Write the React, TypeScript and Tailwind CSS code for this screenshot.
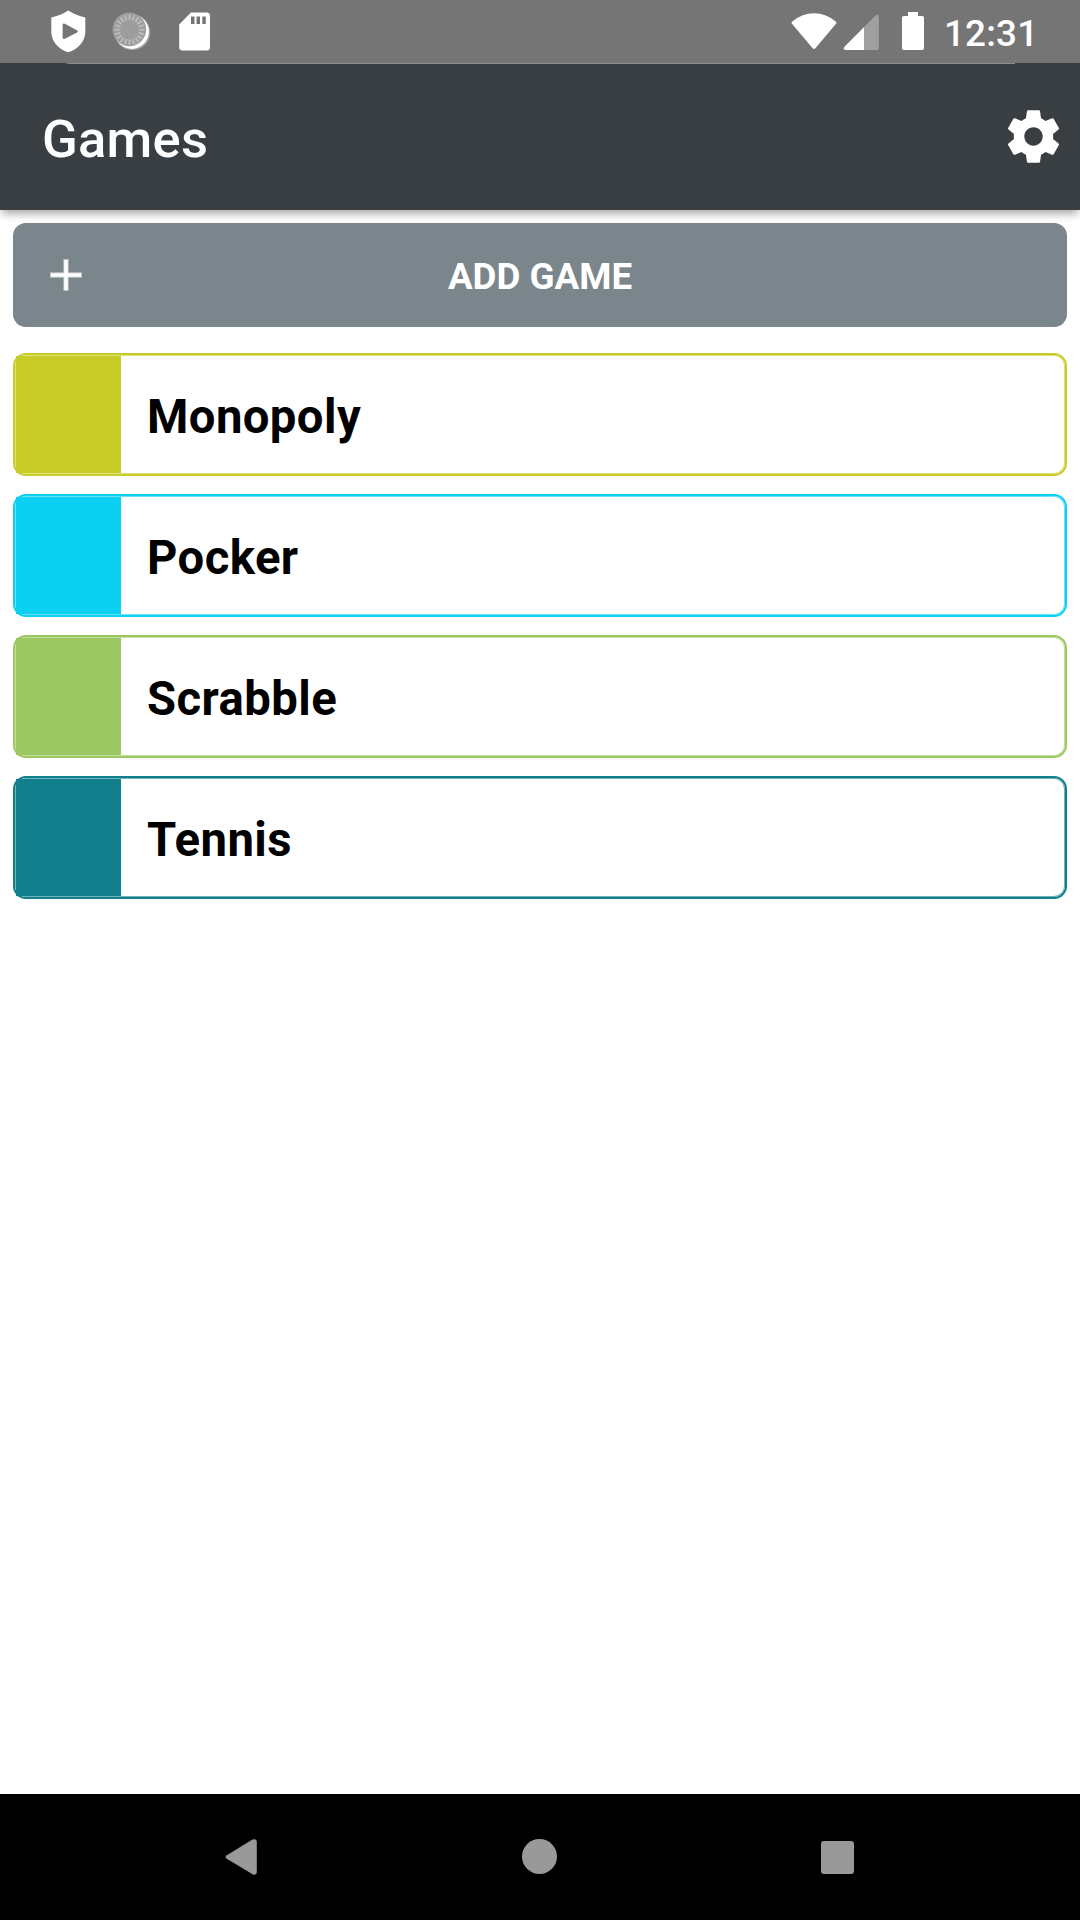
import React from "react";

type Game = { name: string; card: string; block: string };

const games: Game[] = [
  { name: "Monopoly", card: "border-[#c8cc26] inset-shadow-[0_0_0_1px_#dee07d]", block: "bg-[#c8cc26]" },
  { name: "Pocker", card: "border-[#0bd0f2] inset-shadow-[0_0_0_1px_#6de3f7]", block: "bg-[#0bd0f2]" },
  { name: "Scrabble", card: "border-[#9cc861] inset-shadow-[0_0_0_1px_#c4dea0]", block: "bg-[#9cc861]" },
  { name: "Tennis", card: "border-[#127f8d] inset-shadow-[0_0_0_1px_#71b2bb]", block: "bg-[#127f8d]" },
];

const ticks = Array.from({ length: 20 }, (_, i) => i * 18);

function StatusBar() {
  return (
    <div className="flex h-16 flex-col bg-[#757575]">
      <div className="flex h-[63px] items-start pr-[47px] pl-[50px] text-white">
        <svg width="37" height="63" viewBox="50 0 37 63" fill="currentColor">
          <path
            fillRule="evenodd"
            d="M68.3 10.5Q76 15.5 85.3 17.5V32C85.3 41 78 49.5 68.3 52.3C58.6 49.5 51.3 41 51.3 32V17.5Q60.6 15.5 68.3 10.5ZM64.8 23.8Q62.6 23 62.6 25V37.5Q62.6 39.5 64.8 38.8L77 32.4Q78.8 31.3 77 30.2Z"
          />
        </svg>
        <svg className="ml-6" width="40" height="63" viewBox="111 0 40 63">
          <circle cx="132.3" cy="32.3" r="17.9" fill="#a3a3a3" />
          <circle cx="131.7" cy="31.7" r="17.2" fill="#fff" />
          <circle cx="129.4" cy="29.4" r="16.8" fill="#9d9d9d" />
          {ticks.map((a) => (
            <path key={a} d="M129.5 14.5v5.5" stroke="#bdbdbd" strokeWidth="1.8" transform={`rotate(${a} 129.5 29.7)`} />
          ))}
        </svg>
        <svg className="ml-7" width="32" height="63" viewBox="179 0 32 63" fill="currentColor">
          <path
            fillRule="evenodd"
            d="M191 12.5H206.5Q210 12.5 210 16V47Q210 50.5 206.5 50.5H182.7Q179.2 50.5 179.2 47V24.5ZM191 16.5V24H194.5V16.5ZM196.5 16.5V24H200V16.5ZM202.3 16.5V24H205.8V16.5Z"
          />
        </svg>
        <svg className="ml-auto" width="46" height="63" viewBox="791 0 46 63" fill="currentColor">
          <path d="M792 21.8Q801.5 13.2 814 13.2T836 21.8Q837 22.6 836.2 23.6L815.4 48.3Q814 49.8 812.6 48.3L791.8 23.6Q791 22.6 792 21.8Z" />
        </svg>
        <svg className="ml-1.5" width="37" height="63" viewBox="843 0 37 63">
          <path d="M875.5 15.4Q878.9 13.2 878.9 17V48Q878.9 50 876.9 50H845.5Q842.5 49.5 844.5 46.8Z" fill="#9f9f9f" />
          <path d="M864 27.2V50H845.5Q842.5 49.5 844.5 46.8Z" fill="#fff" />
        </svg>
        <svg className="ml-[22px]" width="22" height="63" viewBox="902 0 22 63" fill="currentColor">
          <path d="M908 12H918V16H922.3Q924 16 924 17.7V48.3Q924 50 922.3 50H903.7Q902 50 902 48.3V17.7Q902 16 903.7 16H908Z" />
        </svg>
        <span className="ml-5 w-[89px] pt-2 text-[36.75px] leading-[52px] font-medium tracking-[0.2px] whitespace-nowrap">12:31</span>
      </div>
      <div className="flex h-px bg-[#393e42] pr-[65px] pl-[66px]">
        <div className="h-px w-[3px] bg-[#4f8260]" />
        <div className="h-px flex-1 bg-[#8f8f8f]" />
      </div>
    </div>
  );
}

export default function App() {
  return (
    <div className="flex h-[1920px] w-[1080px] flex-col overflow-hidden bg-white font-[Roboto,sans-serif]">
      <StatusBar />
      <header className="flex h-[146px] items-center justify-between bg-[#393e42] pr-[15px] pl-[42px] text-white shadow-[0_6px_8px_-2px_rgba(0,0,0,0.33)]">
        <h1 className="pt-[3px] text-[52.5px] leading-[62px] font-medium tracking-[0.25px]">Games</h1>
        <svg className="mb-0.5" width="63" height="63" viewBox="0 0 24 24" fill="currentColor">
          <path d="M19.43 12.98c.04-.32.07-.64.07-.98s-.03-.66-.07-.98l2.11-1.65c.19-.15.24-.42.12-.64l-2-3.46c-.12-.22-.39-.3-.61-.22l-2.49 1c-.52-.4-1.08-.73-1.69-.98l-.38-2.65C14.46 2.18 14.25 2 14 2h-4c-.25 0-.46.18-.49.42l-.38 2.65c-.61.25-1.17.59-1.69.98l-2.49-1c-.23-.09-.49 0-.61.22l-2 3.46c-.13.22-.07.49.12.64l2.11 1.65c-.04.32-.07.65-.07.98s.03.66.07.98l-2.11 1.65c-.19.15-.24.42-.12.64l2 3.46c.12.22.39.3.61.22l2.49-1c.52.4 1.08.73 1.69.98l.38 2.65c.03.24.24.42.49.42h4c.25 0 .46-.18.49-.42l.38-2.65c.61-.25 1.17-.59 1.69-.98l2.49 1c.23.09.49 0 .61-.22l2-3.46c.12-.22.07-.49-.12-.64l-2.11-1.65zM12 15.5c-1.93 0-3.5-1.57-3.5-3.5s1.57-3.5 3.5-3.5 3.5 1.57 3.5 3.5-1.57 3.5-3.5 3.5z" />
        </svg>
      </header>
      <main className="flex flex-1 flex-col px-[13px] pt-[13px]">
        <button className="grid h-[104px] grid-cols-[106px_1fr_106px] items-center rounded-[13px] bg-[#7a868b] text-white">
          <svg className="justify-self-center" width="34" height="34" viewBox="0 0 34 34" fill="none" stroke="currentColor">
            <path d="M17 1v32M1 17h32" strokeWidth="5.4" opacity="0.5" />
            <path d="M17 2v30M2 17h30" strokeWidth="3.6" />
          </svg>
          <span className="pt-1 text-[36.75px] leading-[44px] font-bold">ADD GAME</span>
        </button>
        <ul className="mt-[26px] flex flex-col gap-[18px]">
          {games.map((g) => (
            <li key={g.name} className={`flex h-[123px] rounded-[13px] border-2 p-px ${g.card}`}>
              <div className={`w-[105px] ${g.block}`} />
              <span className="pt-[33px] pl-[26px] text-[47.25px] leading-[56px] font-bold tracking-[0.42px] text-black">{g.name}</span>
            </li>
          ))}
        </ul>
      </main>
      <nav className="flex h-[126px] items-center bg-black pl-[225px]">
        <svg width="32" height="38" viewBox="0 0 32 38" fill="#999">
          <path d="M1.8 17.2L27.5 1.6Q31.5 0 31.8 4V34Q31.5 38 27.5 36.2L1.8 20.8Q-.6 19 1.8 17.2Z" />
        </svg>
        <div className="mb-px ml-[265px] size-[35px] rounded-full bg-[#999]" />
        <div className="ml-[264px] size-[33px] rounded-[3px] bg-[#999]" />
      </nav>
    </div>
  );
}
